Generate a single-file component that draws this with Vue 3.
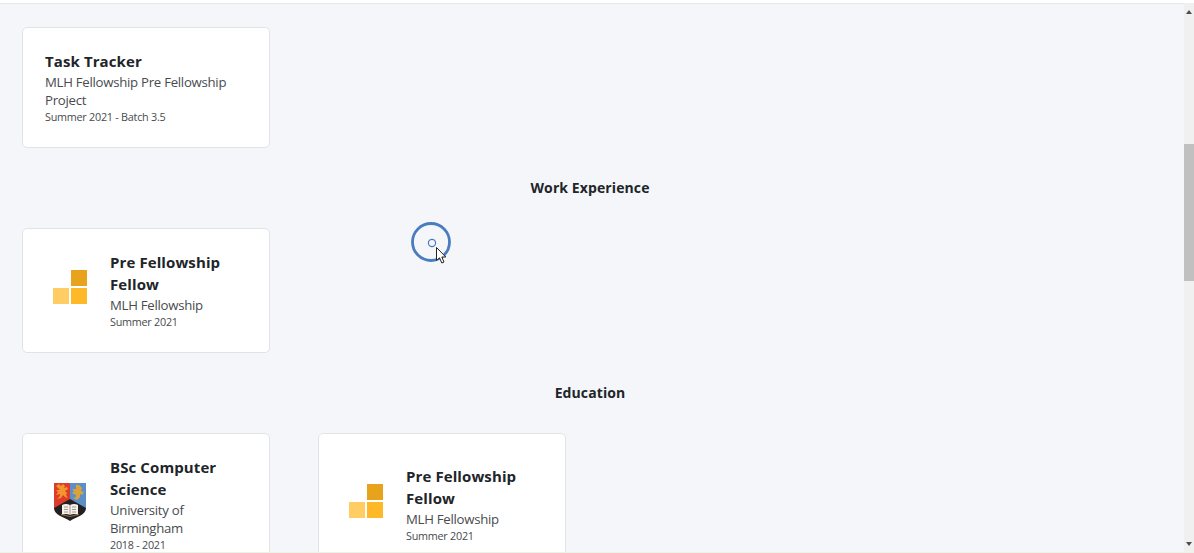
<script setup>
import { ref } from "vue";

let sections = ref([
  {
    heading: "",
    cards: [
      {
        title: ["Task Tracker"],
        place: ["MLH Fellowship Pre Fellowship", "Project"],
        date: "Summer 2021 - Batch 3.5",
      },
    ],
  },
  {
    heading: "Work Experience",
    cards: [
      {
        logo: "mlh",
        title: ["Pre Fellowship", "Fellow"],
        place: ["MLH Fellowship"],
        date: "Summer 2021",
      },
    ],
  },
  {
    heading: "Education",
    cards: [
      {
        logo: "crest",
        title: ["BSc Computer", "Science"],
        place: ["University of", "Birmingham"],
        date: "2018 - 2021",
      },
      {
        logo: "mlh",
        title: ["Pre Fellowship", "Fellow"],
        place: ["MLH Fellowship"],
        date: "Summer 2021",
      },
    ],
  },
]);
</script>

<template>
  <div class="screen">
    <main class="content">
      <section v-for="section in sections">
        <h2 v-if="section.heading">{{ section.heading }}</h2>
        <div class="cards">
          <article class="card" v-for="card in section.cards">
            <div class="logo" v-if="card.logo">
              <svg v-if="card.logo === 'mlh'" width="34" height="34" viewBox="0 0 34 34">
                <rect x="18" width="16" height="16" fill="#e8a31c" />
                <rect y="18" width="16" height="16" fill="#ffcd64" />
                <rect x="18" y="18" width="16" height="16" fill="#ffb928" />
              </svg>
              <svg v-else class="crest" width="32" height="38" viewBox="0 0 32 38">
                <path d="M0 0H16V17L0 26Z" fill="#df3b2b" />
                <path d="M16 0H32V26L16 17Z" fill="#5c8fca" />
                <path d="M0 25L16 16L32 25C32 32 22 34 16 38C10 34 0 32 0 25Z" fill="#241f20" />
                <path
                  d="M2 3L5 1L7 3L9 1L11 3L10 5L13 4L14 6L11 8L13 10L12 12L14 15L11 14L9 12L7 15L3 16L6 13L6 11L2 12L4 9L2 7L6 7Z"
                  fill="#f1952c"
                />
                <path
                  d="M22 2L25 2L28 5L27 8L30 9L28 12L26 11L26 14L23 17L19 15L22 14L22 12L18 10L20 8L18 6L22 6Z"
                  fill="#d9a23b"
                />
                <path d="M8 22Q12 20 16 22Q20 20 24 22V32Q20 30 16 32Q12 30 8 32Z" fill="#f5f1e9" />
                <path
                  d="M16 22V32M10 24H14M18 24H22M10 26.5H14M18 26.5H22M10 29H14M18 29H22"
                  stroke="#8a8582"
                  stroke-width=".8"
                />
                <path d="M7 31.5L16 33.5L25 31.5" fill="none" stroke="#9b6f35" />
              </svg>
            </div>
            <div class="info">
              <h3>
                <span v-for="line in card.title">{{ line }}</span>
              </h3>
              <p class="place">
                <span v-for="line in card.place">{{ line }}</span>
              </p>
              <p class="date">{{ card.date }}</p>
            </div>
          </article>
        </div>
      </section>
    </main>
    <aside class="scrollbar">
      <svg class="up" width="6" height="4" viewBox="0 0 6 4"><path d="M0 4L3 0L6 4Z" /></svg>
      <div class="thumb"></div>
      <svg class="down" width="6" height="4" viewBox="0 0 6 4"><path d="M0 0L3 4L6 0Z" /></svg>
    </aside>

    
    <svg class="pointer" width="42" height="44" viewBox="0 0 42 44">
      <circle cx="21" cy="21" r="18.5" fill="none" stroke="#4a7dbd" stroke-width="2.8" />
      <circle cx="22" cy="22" r="3.6" fill="none" stroke="#4a7dbd" stroke-width="1.2" />
      <path
        d="M26.5 26.5V39.5L29.5 36.8L31.8 42L34 41L31.8 36H35.8Z"
        fill="#fff"
        stroke="#222"
        stroke-width="1"
      />
    </svg>
  </div>
</template>

<style>
body {
  overflow: hidden;
}
</style>

<style scoped>
.screen {
  position: relative;
  box-sizing: border-box;
  display: flex;
  height: 553px;
  overflow: hidden;
  border-top: 3px solid #fff;
  border-bottom: 1px solid #eff0e6;
  background: #f4f6fa;
  color: #212529;
  font-family: "Open Sans", "Noto Sans", sans-serif;
}
.content {
  flex: 1;
  box-sizing: border-box;
  height: 549px;
  overflow: hidden;
  border-top: 1px solid #e7e8eb;
  padding: 23px 4px 0 22px;
}
h2,
h3,
p {
  margin: 0;
}
h2 {
  height: 80px;
  padding-right: 22px;
  font-size: 14px;
  line-height: 80px;
  letter-spacing: 0.1px;
  text-align: center;
}
.cards {
  display: flex;
  gap: 48px;
}
.card {
  box-sizing: border-box;
  display: flex;
  align-items: center;
  width: 248px;
  padding: 22px 22px 23px;
  border: 1px solid #e1e3e7;
  border-radius: 5px;
  background: #fff;
}
.logo {
  display: flex;
  width: 34px;
  margin: 0 23px 0 8px;
  padding-bottom: 7px;
}
.crest {
  margin: 1px 0 -1px 1px;
}
.info span {
  display: block;
  white-space: nowrap;
}
h3 {
  padding-bottom: 1px;
  font-size: 15px;
  line-height: 22px;
  letter-spacing: 0.1px;
}
.place {
  color: #484b4e;
  font-size: 13.2px;
  line-height: 18px;
  letter-spacing: -0.27px;
}
.date {
  margin-bottom: -1px;
  color: #484b4e;
  font-size: 10.8px;
  line-height: 16px;
  letter-spacing: -0.25px;
}
.scrollbar {
  display: flex;
  flex-direction: column;
  align-items: center;
  box-sizing: border-box;
  width: 10px;
  padding: 7px 0 6px;
  background: #f0f0f0;
  fill: #4c4c4c;
}
.thumb {
  width: 10px;
  height: 137px;
  margin-top: 130px;
  background: #c0c0c0;
}
.down {
  margin-top: auto;
}
.pointer {
  position: absolute;
  top: 218px;
  left: 410px;
}
</style>
